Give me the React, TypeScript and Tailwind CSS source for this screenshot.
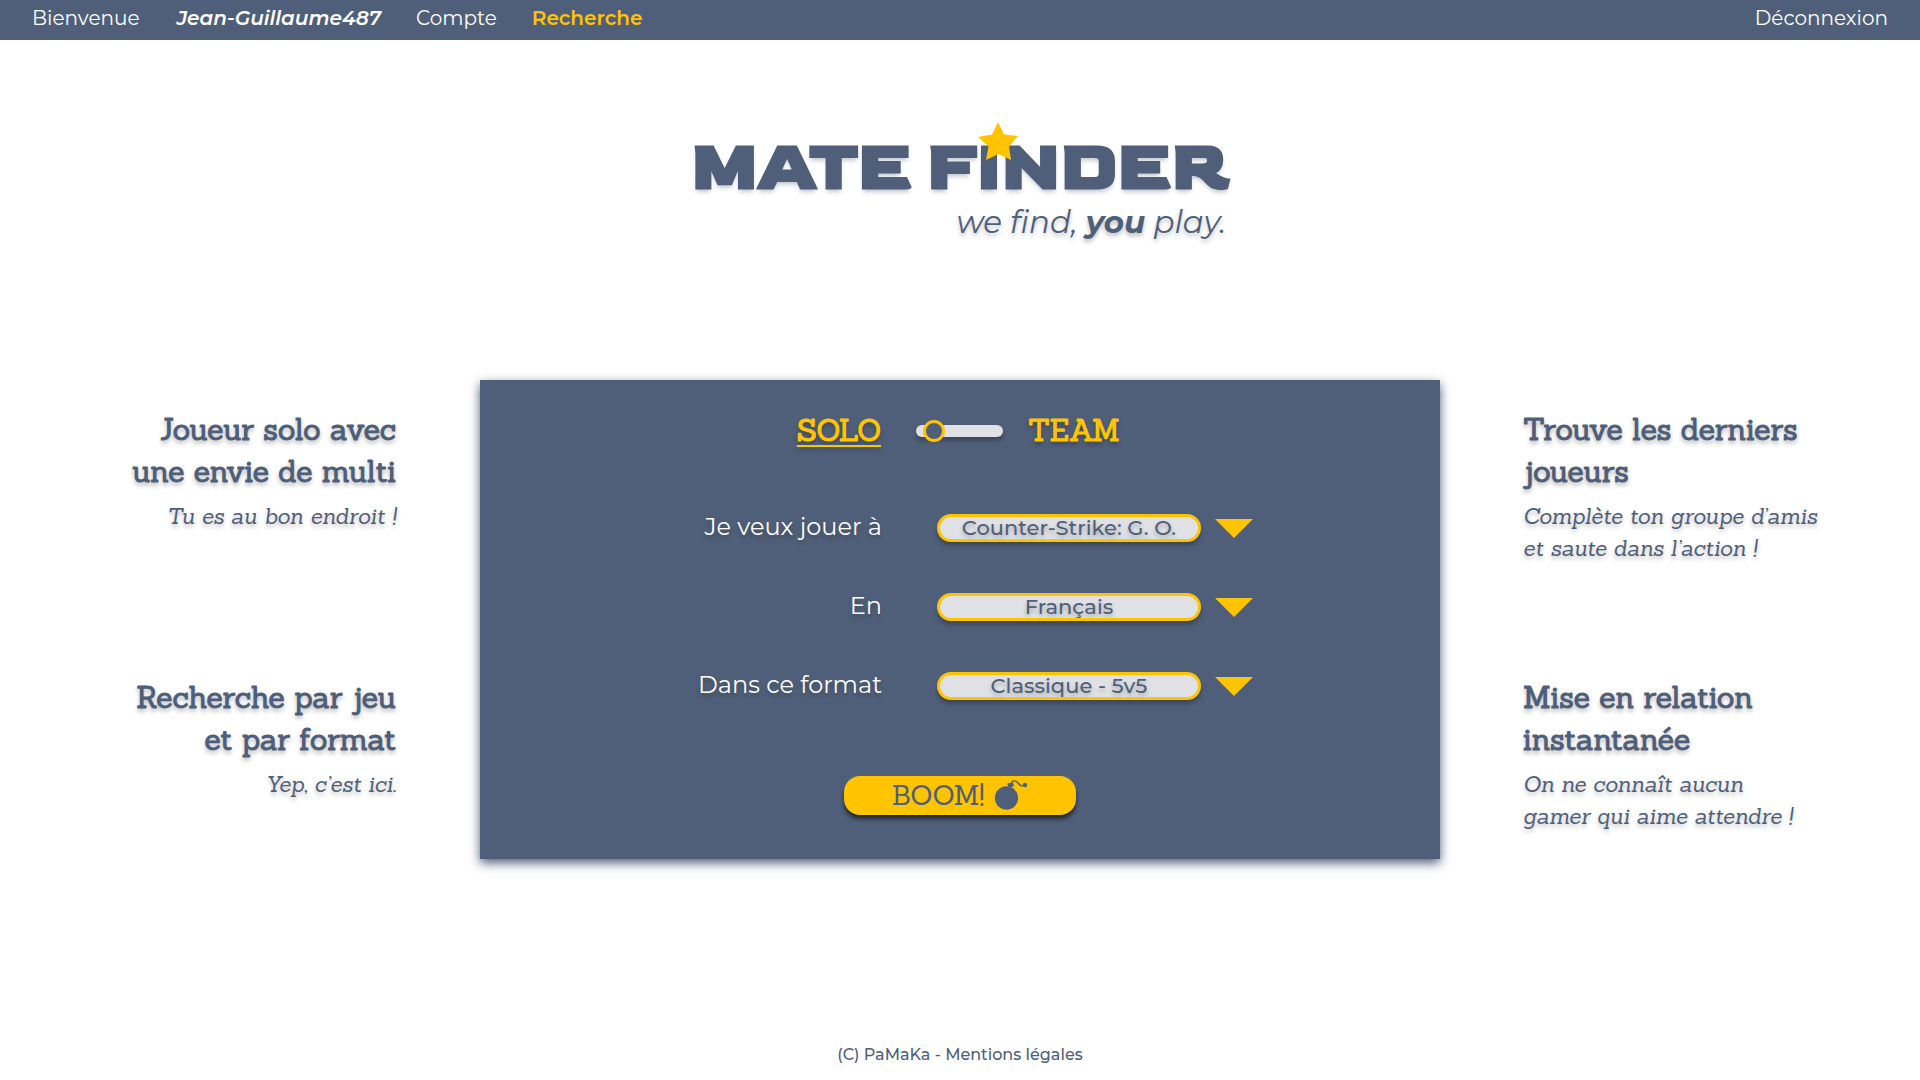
import React from "react";

const sans = "font-['Montserrat','Inter',sans-serif]";
const slab = "font-['Roboto_Slab','Sanchez','DejaVu_Serif_Condensed','DejaVu_Serif',serif]";
const textShadow = "[text-shadow:0_3px_4px_rgba(0,0,0,0.25)]";

function Star() {
  return (
    <svg
      viewBox="0 0 40 39"
      aria-hidden="true"
      className="absolute top-[-14px] left-[57%] h-[39px] w-10 -translate-x-1/2 fill-[#ffc400]"
    >
      <path d="M20 0 26 12.500 40 14 31 24.500 33 38 20.500 32 8 38 10.500 24.500 0 15 14 12.500Z" />
    </svg>
  );
}

function Bomb() {
  return (
    <svg viewBox="0 0 34 30" aria-hidden="true" className="h-[30px] w-[34px] text-[#505f79]">
      <circle cx="12.500" cy="18" r="11.700" fill="currentColor" />
      <path d="M13 3.500 19 2.500 20 6 15 8Z" fill="currentColor" />
      <path d="M17 4C18 0 22 0 24 3S28 7 32 5" fill="none" stroke="currentColor" strokeWidth="1.400" />
      <circle cx="31" cy="5" r="2.200" fill="currentColor" />
    </svg>
  );
}

function Feature({ title, text, right = false }: { title: string[]; text: string[]; right?: boolean }) {
  return (
    <article className={`${right ? "text-left" : "text-right"} ${textShadow} h-[268px]`}>
      <h2 className={`${slab} text-[30px] leading-[42px] font-bold`}>
        {title.map((line) => (
          <span key={line} className="block whitespace-nowrap">{line}</span>
        ))}
      </h2>
      <p className={`${slab} mt-2 text-[22px] leading-8 italic`}>
        {text.map((line) => (
          <span key={line} className="block whitespace-nowrap">{line}</span>
        ))}
      </p>
    </article>
  );
}

function Field({ id, label, options }: { id: string; label: string; options: string[] }) {
  return (
    <div className="grid h-7 grid-cols-[402fr_558fr] items-center">
      <label htmlFor={id} className={`pb-0.5 text-right text-[24px] leading-7 text-white ${textShadow}`}>
        {label}
      </label>
      <div className="ml-[55px] flex items-center gap-[14px]">
        <select
          id={id}
          className={`h-7 w-[264px] appearance-none rounded-[14px] border-[3px] border-[#ffc400] bg-[#dfe1e5] text-center text-[21px] leading-[22px] font-medium text-[#505f79] shadow-[0_4px_4px_rgba(0,0,0,0.25)] [text-align-last:center] ${textShadow}`}
        >
          {options.map((o) => (
            <option key={o}>{o}</option>
          ))}
        </select>
        <svg viewBox="0 0 38 19" aria-hidden="true" className="h-[19px] w-[38px] fill-[#ffc400]">
          <path d="M0 0H38L19 19Z" />
        </svg>
      </div>
    </div>
  );
}

export default function App() {
  return (
    <div className={`${sans} flex min-h-screen flex-col bg-white text-[#505f79]`}>
      <header className="flex h-10 items-center justify-between bg-[#505f79] px-8 pb-1 text-[20px] leading-9 text-white">
        <nav className="flex items-center gap-[35px]">
          <span>
            Bienvenue <em className="ml-8 font-semibold">Jean-Guillaume487</em>
          </span>
          <a href="#compte">Compte</a>
          <a href="#recherche" aria-current="page" className="font-semibold text-[#ffc400]">Recherche</a>
        </nav>
        <a href="#deconnexion">Déconnexion</a>
      </header>

      <div className="mx-auto mt-24 flex w-[538px] flex-col">
        <h1 className="relative flex justify-center font-['Goldman','Montserrat','Inter',sans-serif] text-[68px] leading-[64px] font-bold whitespace-nowrap [-webkit-text-stroke:3px_#505f79] [text-shadow:0_4px_4px_rgba(80,95,121,0.35)]">
          MATE FINDER
          <Star />
        </h1>
        <p className={`pr-[3px] text-right text-[31px] leading-[44px] italic ${textShadow}`}>
          we find, <strong className="font-bold">you</strong> play.
        </p>
      </div>

      <main className="mt-[136px] grid grid-cols-[1fr_2fr_1fr]">
        <section className="pt-7 pr-[84px]">
          <Feature title={["Joueur solo avec", "une envie de multi"]} text={["Tu es au bon endroit !"]} />
          <Feature title={["Recherche par jeu", "et par format"]} text={["Yep, c’est ici."]} />
        </section>

        <form
          onSubmit={(e) => e.preventDefault()}
          className="flex h-[479px] flex-col bg-[#505f79] pt-[34px] shadow-[0_4px_10px_#505f79]"
        >
          <div className={`${slab} grid h-8 grid-cols-[401fr_559fr] items-center text-[30px] leading-8 font-bold text-[#ffc400]`}>
            <span className={`pb-0.5 text-right underline decoration-2 underline-offset-4 ${textShadow}`}>SOLO</span>
            <div className="ml-[35px] flex items-center gap-[25px]">
              <input
                type="range"
                aria-label="Solo ou team"
                min={0}
                max={1}
                defaultValue={0}
                className="h-3 w-[87px] appearance-none rounded-full bg-[#dfe1e5] px-[7px] shadow-[0_4px_4px_rgba(0,0,0,0.25)] [&::-webkit-slider-thumb]:size-[22px] [&::-webkit-slider-thumb]:appearance-none [&::-webkit-slider-thumb]:rounded-full [&::-webkit-slider-thumb]:border-[3px] [&::-webkit-slider-thumb]:border-solid [&::-webkit-slider-thumb]:border-[#ffc400] [&::-webkit-slider-thumb]:bg-[#505f79]"
              />
              <span className={`pb-0.5 ${textShadow}`}>TEAM</span>
            </div>
          </div>

          <div className="mt-[67px] flex flex-col gap-[51px]">
            <Field id="jeu" label="Je veux jouer à" options={["Counter-Strike: G. O."]} />
            <Field id="langue" label="En" options={["Français"]} />
            <Field id="format" label="Dans ce format" options={["Classique - 5v5"]} />
          </div>

          <button
            type="submit"
            className={`${slab} mx-auto mt-[77px] flex h-[39px] w-[232px] items-center justify-center gap-[10px] rounded-[16px] bg-[#ffc400] pb-0.5 text-[28px] leading-8 shadow-[0_4px_4px_rgba(0,0,0,0.6)]`}
          >
            BOOM! <Bomb />
          </button>
        </form>

        <section className="pt-7 pl-[83px]">
          <Feature right title={["Trouve les derniers", "joueurs"]} text={["Complète ton groupe d’amis", "et saute dans l’action !"]} />
          <Feature right title={["Mise en relation", "instantanée"]} text={["On ne connaît aucun", "gamer qui aime attendre !"]} />
        </section>
      </main>

      <footer className="mt-auto pb-[13px] text-center text-[16px] leading-6 font-medium">
        (C) PaMaKa - <a href="#mentions">Mentions légales</a>
      </footer>
    </div>
  );
}
